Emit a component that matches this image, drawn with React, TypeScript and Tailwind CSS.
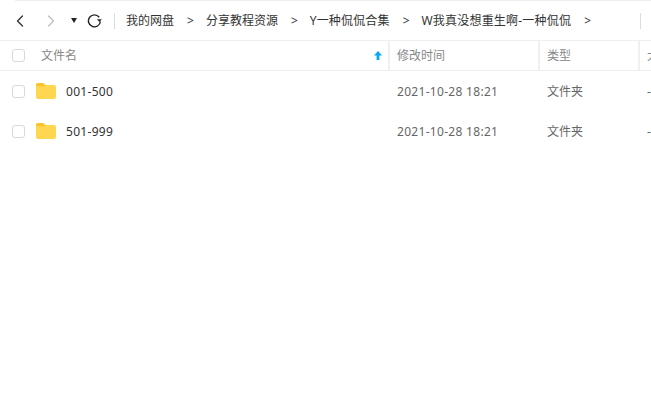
import { ChevronLeft, ChevronRight } from 'lucide-react';

const font = "font-['Noto_Sans','Noto_Sans_CJK_SC',sans-serif]";
const crumbs = [
  { name: '我的网盘', cls: '' },
  { name: '分享教程资源', cls: '' },
  { name: 'Y一种侃侃合集', cls: 'tracking-[0.15px]' },
  { name: 'W我真没想重生啊-一种侃侃', cls: 'tracking-[0.2px]' },
];
const rows = ['001-500', '501-999'];

function Check() {
  return <div className="h-[13px] w-[13px] shrink-0 rounded-[3px] border border-[#d9d9d9] bg-white" />;
}

function Folder() {
  return (
    <svg width="20" height="16" viewBox="0 0 20 16" className="shrink-0">
      <path d="M0 2a2 2 0 0 1 2-2h4.5a2 2 0 0 1 1.5.7L9.2 2H18a2 2 0 0 1 2 2v10a2 2 0 0 1-2 2H2a2 2 0 0 1-2-2z" fill="#ffd650" />
      <path d="M0 3.2h10L9.2 2 8 .7A2 2 0 0 0 6.5 0H2a2 2 0 0 0-2 2z" fill="#fcc52f" />
    </svg>
  );
}

function Refresh() {
  return (
    <svg width="15" height="15" viewBox="0 0 15 15" className="ml-[10px] shrink-0">
      <path d="M12.2 4.2A6 6 0 1 0 13.4 8.5" fill="none" stroke="#222222" strokeWidth="1.4" />
      <path d="M10 6.2h4.8L12.4 9z" fill="#222222" />
    </svg>
  );
}

export default function App() {
  return (
    <div className={`h-[417px] w-[651px] overflow-hidden bg-white text-[12px] ${font}`}>
      <div className="ml-[15px] h-px bg-[#eeeeee]" />

      {/* toolbar */}
      <div className="flex h-[39px] items-center">
        <ChevronLeft className="ml-[10px] h-[20px] w-[20px] text-[#333333]" strokeWidth={1.6} />
        <ChevronRight className="ml-[11px] h-[20px] w-[20px] text-[#bbbbbb]" strokeWidth={1.4} />
        <div className="ml-[10px] h-0 w-0 border-x-[3.5px] border-t-[5px] border-x-transparent border-t-[#222222]" />
        <Refresh />
        <div className="ml-[12px] h-[16px] w-px bg-[#dddddd]" />
        <div className="ml-[11px] flex items-center whitespace-nowrap text-[#333333]">
          {crumbs.map((c) => (
            <div key={c.name} className="flex items-center">
              <span className={c.cls}>{c.name}</span>
              <span className="ml-[13px] mr-[12px] text-[#333333]">&gt;</span>
            </div>
          ))}
        </div>
        <div className="ml-auto mr-[10px] h-[16px] w-px bg-[#dddddd]" />
      </div>

      {/* table head */}
      <div className="flex h-[31px] items-center border-y border-[#eeeeee] text-[#888888]">
        <div className="flex h-full w-[388px] shrink-0 items-center pl-[12px]">
          <Check />
          <span className="ml-[16px]">文件名</span>
          <svg width="8" height="9" viewBox="0 0 8 9" className="ml-auto mr-[6px]">
            <path d="M4 0 8 4.5H5.4V9H2.6V4.5H0z" fill="#06a7ff" />
          </svg>
        </div>
        <div className="flex h-full w-[150px] shrink-0 items-center border-l-2 border-[#f0f0f0] pl-[7px]">修改时间</div>
        <div className="flex h-full w-[100px] shrink-0 items-center border-l-2 border-[#f0f0f0] pl-[7px]">类型</div>
        <div className="flex h-full flex-1 items-center overflow-hidden whitespace-nowrap border-l-2 border-[#f0f0f0] pl-[7px]">大小</div>
      </div>

      {/* rows */}
      {rows.map((r) => (
        <div key={r} className="flex h-[40px] items-center">
          <div className="flex w-[388px] shrink-0 items-center pl-[12px]">
            <Check />
            <div className="ml-[11px]"><Folder /></div>
            <span className="ml-[10px] pt-px tracking-[0.3px] text-[#333333]">{r}</span>
          </div>
          <div className="w-[150px] shrink-0 pl-[9px] pt-px tracking-[0.3px] text-[#666666]">2021-10-28 18:21</div>
          <div className="w-[100px] shrink-0 pl-[9px] pt-px text-[#666666]">文件夹</div>
          <div className="flex-1 pl-[9px] pt-px text-[#666666]">-</div>
        </div>
      ))}
    </div>
  );
}
